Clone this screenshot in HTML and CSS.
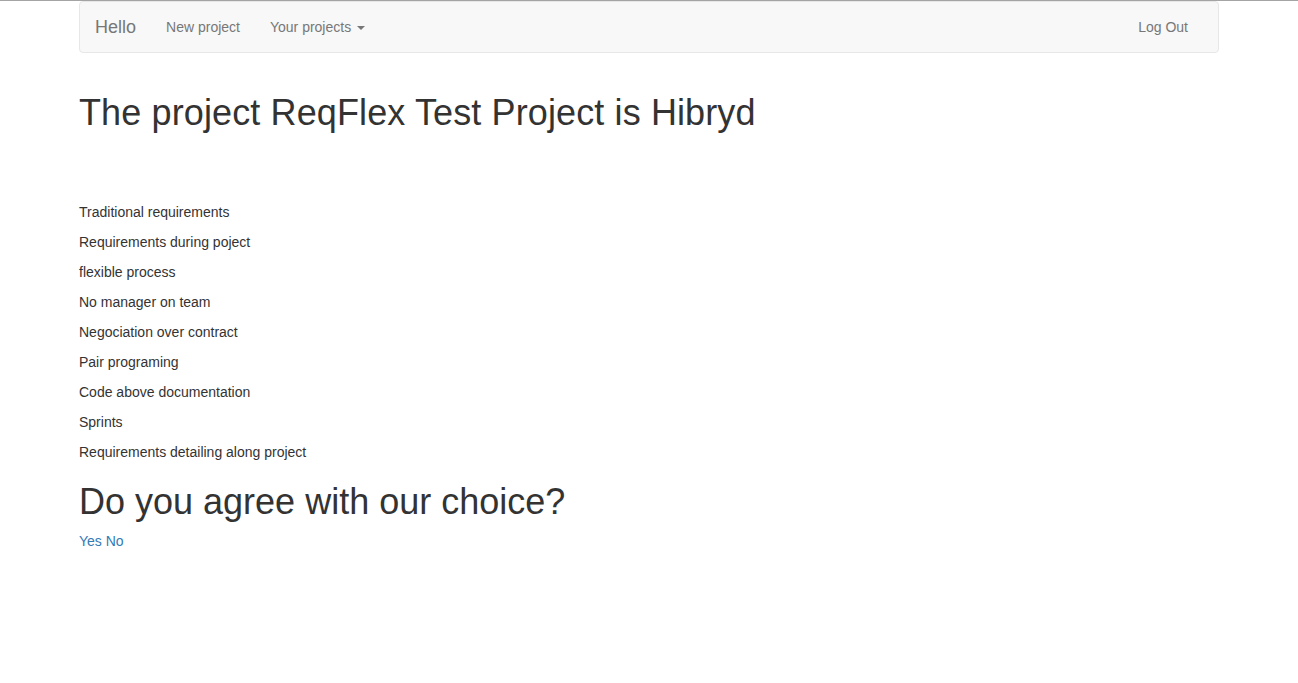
FILE: index.html
```html
<!DOCTYPE html>
<html lang="en">
<head>
<meta charset="utf-8">
<title>ReqFlex</title>
<link rel="stylesheet" href="styles.css">
</head>
<body>
<div class="container">
  <nav class="navbar">
    <div class="nav-left">
      <a class="brand" href="#">Hello</a>
      <a class="nav-link" href="#">New project</a>
      <a class="nav-link" href="#">Your projects <span class="caret"></span></a>
    </div>
    <div class="nav-right">
      <a class="nav-link" href="#">Log Out</a>
    </div>
  </nav>
  <h1 class="title">The project ReqFlex Test Project is Hibryd</h1>
  <div class="criteria">
    <p>Traditional requirements</p>
    <p>Requirements during poject</p>
    <p>flexible process</p>
    <p>No manager on team</p>
    <p>Negociation over contract</p>
    <p>Pair programing</p>
    <p>Code above documentation</p>
    <p>Sprints</p>
    <p>Requirements detailing along project</p>
  </div>
  <h1 class="title question">Do you agree with our choice?</h1>
  <div class="answers"><a href="#">Yes</a> <a href="#">No</a></div>
</div>
</body>
</html>
```

FILE: styles.css
```css
* { box-sizing: border-box; }
html, body { margin: 0; padding: 0; }
body {
  border-top: 1px solid #a4a4a4;
  font-family: "Liberation Sans", Arial, Helvetica, sans-serif;
  font-size: 14px;
  line-height: 20px;
  color: #333;
  background: #fff;
}
a { color: #337ab7; text-decoration: none; }
.container {
  width: 1170px;
  margin: 0 auto;
  padding: 0 15px;
}
.navbar {
  display: flex;
  justify-content: space-between;
  height: 52px;
  background: #f8f8f8;
  border: 1px solid #e7e7e7;
  border-radius: 4px;
  margin-bottom: 40px;
}
.nav-left, .nav-right { display: flex; }
.nav-right { margin-right: 15px; }
.brand {
  font-size: 18px;
  line-height: 20px;
  padding: 15px;
  color: #777;
}
.nav-link {
  padding: 15px;
  line-height: 20px;
  color: #777;
}
.caret {
  display: inline-block;
  width: 0;
  height: 0;
  margin-left: 2px;
  vertical-align: middle;
  border-top: 4px solid #777;
  border-left: 4px solid transparent;
  border-right: 4px solid transparent;
}
.title {
  font-size: 36px;
  font-weight: 500;
  line-height: 1.1;
  margin: 20px 0 10px;
}
.title:first-of-type { letter-spacing: 0.12px; }
.criteria { padding-top: 59px; }
.criteria p { margin: 0 0 10px; }
.answers { line-height: 20px; }
```
